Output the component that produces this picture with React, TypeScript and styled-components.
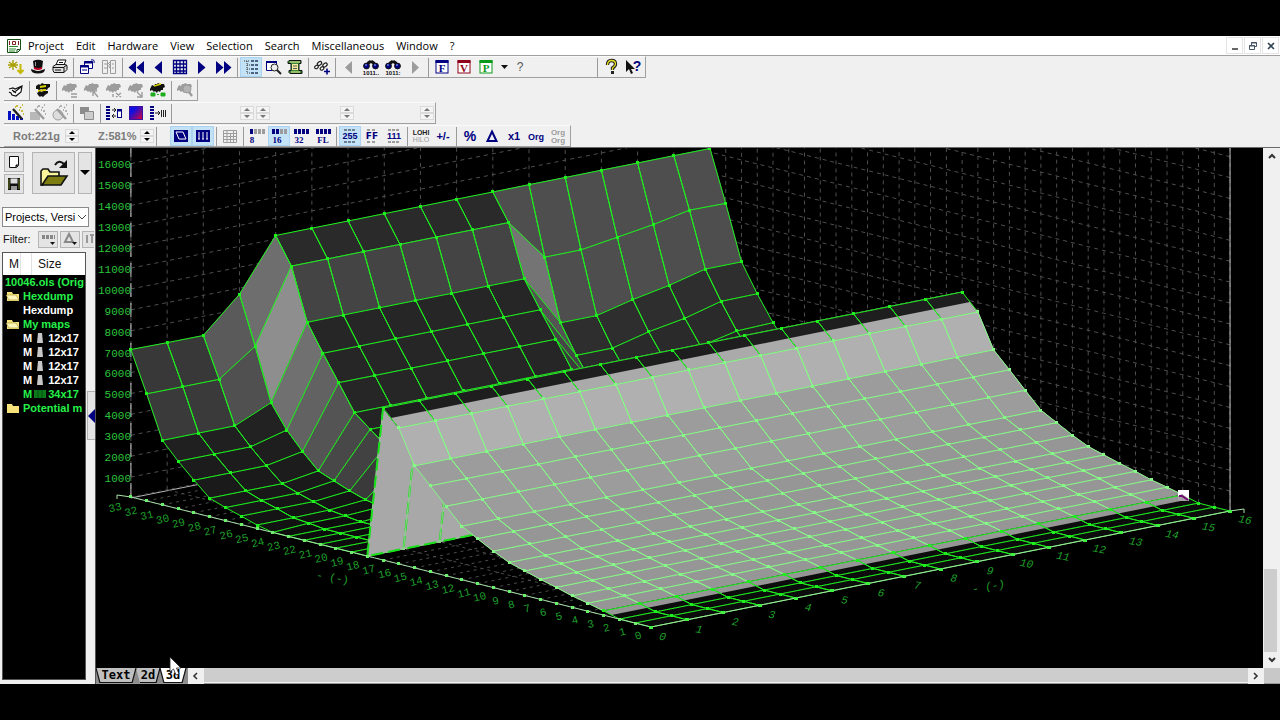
import React from "react";
import styled, { createGlobalStyle } from "styled-components";

const GlobalStyle = createGlobalStyle`
  * { box-sizing: border-box; }
  body { margin: 0; background: #000; font-family: "Open Sans", "Noto Sans", sans-serif; }
  button, select, input { font: inherit; color: inherit; }
  svg { flex: none; }
`;

/* ---------- page frame ---------- */

const Page = styled.div`
  min-height: 100vh;
  padding: 36px 0;
  display: flex;
  flex-direction: column;
  background: #000;
`;
const AppWindow = styled.div`
  flex: 1;
  display: flex;
  flex-direction: column;
  background: #f0f0f0;
  min-width: 0;
`;
const MenuBar = styled.nav`
  display: flex;
  align-items: center;
  height: 20px;
  padding: 0 0 0 6px;
  background: #fff;
  border-bottom: 1px solid #a0a0a0;
`;
const MenuItems = styled.div`
  display: flex;
  flex: 1;
  gap: 12px;
  padding-left: 6px;
`;
const MenuItem = styled.button`
  border: 0;
  padding: 0;
  background: none;
  color: #000;
  font-size: 11px;
  line-height: 18px;
  white-space: nowrap;
`;
const WindowButton = styled.button`
  display: grid;
  place-items: center;
  width: 17px;
  height: 17px;
  margin-right: 1px;
  padding: 0;
  border: 1px solid #e4e4e4;
  background: #fff;
`;

/* ---------- toolbars ---------- */

const ToolArea = styled.div`
  display: flex;
  flex-direction: column;
  align-items: flex-start;
  gap: 1px;
  padding-left: 4px;
  border-bottom: 1px solid #6a6a6a;
`;
const Toolbar = styled.div`
  display: flex;
  align-items: center;
  height: 22px;
  padding: 0 1px;
  border-right: 1px solid #a0a0a0;
  border-bottom: 1px solid #a0a0a0;
  border-top: 1px solid #fafafa;
`;
const ToolButton = styled.button<{ $on?: boolean; $narrow?: boolean }>`
  display: grid;
  place-items: center;
  place-content: center;
  width: ${(p) => (p.$narrow ? 15 : 22)}px;
  height: 20px;
  padding: 0;
  border: 1px solid ${(p) => (p.$on ? "#a9d3f0" : "transparent")};
  background: ${(p) => (p.$on ? "#c4e2f6" : "transparent")};
`;
const Separator = styled.span`
  width: 5px;
  height: 19px;
  display: flex;
  justify-content: center;
  &::before {
    content: "";
    width: 1px;
    background: #9a9a9a;
  }
`;
const Space = styled.span<{ $w: number }>`
  width: ${(p) => p.$w}px;
`;
const Readout = styled.span<{ $w: number }>`
  width: ${(p) => p.$w}px;
  padding-left: 8px;
  color: #7b7b7b;
  font: bold 11px "Liberation Sans", sans-serif;
  white-space: nowrap;
  overflow: hidden;
`;
const SpinnerBox = styled.span`
  display: flex;
  flex-direction: column;
  width: 14px;
`;
const SpinnerButton = styled.button<{ $dim?: boolean }>`
  display: grid;
  place-items: center;
  width: 14px;
  height: 7px;
  padding: 0;
  border: 1px solid #dadada;
  background: #f4f4f4;
  color: ${(p) => (p.$dim ? "#777" : "#000")};
`;

/* ---------- left panel ---------- */

const Body = styled.div`
  flex: 1;
  display: flex;
  min-height: 0;
`;
const SidePanel = styled.aside`
  width: 96px;
  flex: none;
  display: flex;
  background: #f0f0f0;
  border-right: 1px solid #555;
`;
const SideMain = styled.div`
  width: 87px;
  flex: none;
  display: flex;
  flex-direction: column;
  padding: 4px 0 4px 2px;
`;
const FileButtons = styled.div`
  display: flex;
  gap: 3px;
  width: 90px;
  padding-left: 2px;
  height: 42px;
`;
const SmallStack = styled.div`
  display: flex;
  flex-direction: column;
  gap: 2px;
  width: 25px;
`;
const PanelButton = styled.button<{ $w: number; $h: number }>`
  display: grid;
  place-items: center;
  flex: none;
  width: ${(p) => p.$w}px;
  height: ${(p) => p.$h}px;
  padding: 0;
  border: 1px solid #b4b4b4;
  background: #e4e4e4;
`;
const SelectWrap = styled.div`
  display: flex;
  align-items: center;
  width: 87px;
  height: 20px;
  margin-top: 13px;
  border: 1px solid #8a8a8a;
  background: #fff;
`;
const ProjectSelect = styled.select`
  appearance: none;
  flex: 1;
  min-width: 0;
  padding: 0 0 0 2px;
  border: 0;
  background: transparent;
  font: 11px "Liberation Sans", sans-serif;
  overflow: hidden;
`;
const FilterRow = styled.div`
  display: flex;
  align-items: center;
  gap: 2px;
  width: 92px;
  height: 20px;
  margin-top: 2px;
  overflow: hidden;
  color: #111;
`;
const FilterLabel = styled.span`
  width: 34px;
  flex: none;
  padding-left: 1px;
  font: 11px "Liberation Sans", sans-serif;
`;
const Tree = styled.div`
  flex: 1;
  width: 84px;
  margin-top: 3px;
  border: 1px solid #555;
  background: #000;
  overflow: hidden;
`;
const TreeHead = styled.div`
  display: flex;
  height: 22px;
  background: #fff;
  color: #111;
  font: 12px/22px "Liberation Sans", sans-serif;
`;
const HeadCell = styled.span<{ $w: number }>`
  width: ${(p) => p.$w}px;
  flex: none;
  padding-left: 6px;
  border-right: 1px solid #e2e2e2;
`;
const TreeRow = styled.div<{ $c: string; $indent?: boolean }>`
  display: flex;
  align-items: center;
  gap: 2px;
  height: 14px;
  padding-left: ${(p) => (p.$indent ? 20 : 2)}px;
  color: ${(p) => p.$c};
  font: bold 11px/14px "Liberation Sans", sans-serif;
  white-space: nowrap;
`;
const Splitter = styled.div`
  width: 8px;
  display: flex;
  flex-direction: column;
  padding-top: 243px;
`;
const CollapseButton = styled.button`
  display: grid;
  place-items: center;
  width: 8px;
  height: 49px;
  padding: 0;
  border: 1px solid #b0b0b0;
  border-right: 0;
  background: #e4e4e4;
`;

/* ---------- 3d view ---------- */

const MainView = styled.main`
  flex: 1;
  min-width: 0;
  display: flex;
  flex-direction: column;
  background: #000;
`;
const ViewRow = styled.div`
  flex: 1;
  display: flex;
  min-height: 0;
`;
const Canvas = styled.div`
  flex: 1;
  min-width: 0;
  background: #000;
  overflow: hidden;
  svg { display: block; width: 100%; height: auto; }
`;
const VScroll = styled.div`
  width: 17px;
  display: flex;
  flex-direction: column;
  background: #f0f0f0;
  padding: 0 3px 0 1px;
`;
const ScrollButton = styled.button`
  display: grid;
  place-items: center;
  flex: none;
  width: 16px;
  height: 16px;
  padding: 0;
  border: 0;
  background: #f0f0f0;
`;
const VTrack = styled.div`
  flex: 1;
  display: flex;
  flex-direction: column;
  justify-content: flex-end;
`;
const VThumb = styled.div`
  width: 13px;
  height: 17%;
  background: #cdcdcd;
`;
const BottomBar = styled.div`
  display: flex;
  height: 16px;
  background: #f0f0f0;
  border-bottom: 1px solid #999;
`;
const HThumb = styled.div`
  flex: 1;
  margin-bottom: 1px;
  background: #cdcdcd;
`;
const Corner = styled.div`
  width: 16px;
  background: #c8c8c8;
`;
const Tabs = styled.div`
  display: flex;
  position: relative;
  width: 92px;
  background: #8c8c8c;
`;
const Tab = styled.button<{ $w: number; $on?: boolean }>`
  width: ${(p) => p.$w}px;
  height: 15px;
  padding: 0;
  border: 0;
  background: ${(p) => (p.$on ? "#fff" : "#c0c0c0")};
  clip-path: polygon(0 0, 100% 0, calc(100% - 4px) 100%, 4px 100%);
  color: #000;
  font: bold 12px/15px "DejaVu Sans Mono", monospace;
`;
const TabEdges = styled.svg`
  position: absolute;
  left: 0;
  top: 0;
  pointer-events: none;
`;
const Pointer = styled.svg`
  position: absolute;
  left: 73px;
  top: -12px;
  pointer-events: none;
`;

/* ---------- icons ---------- */

const NAVY = "#000080";
const GREY = "#9c9c9c";

const Glyph = ({ children, w = 18, h = 18 }: { children: React.ReactNode; w?: number; h?: number }) => (
  <svg width={w} height={h} viewBox={`0 0 ${w} ${h}`} aria-hidden="true">{children}</svg>
);
const T = ({ x, y, s = 8, c = NAVY, t, f = "Liberation Sans", b = "bold" }: { x: number; y: number; s?: number; c?: string; t: string; f?: string; b?: string }) => (
  <text x={x} y={y} fontSize={s} fill={c} fontFamily={`"${f}", sans-serif`} fontWeight={b} textAnchor="middle">{t}</text>
);
const wand = (c: string, spark: string) => (
  <>
    <path d="M6 5l9 10" stroke={c} strokeWidth="2.4" />
    <path d="M10 1v2M14 3l-1 1M16 7h-2M12 6h1M15 1h1M8 3h1M16 10h1" stroke={spark} strokeWidth="1.5" />
  </>
);
const chip = (c: string) => (
  <path d="M1 8l2-4 2 1 1-2 2 0 1-1 2 1 4 0 1 3-2 1 0 2-2 0-1 2-2-1-1 2-2-2-1 1-2-2-2 1z" fill={c} />
);
const bars = (lit: number) => [0, 1, 2, 3].map((i) => (
  <rect key={i} x={2 + i * 4} y="2" width="3" height="5" fill={i < lit ? NAVY : GREY} />
));
const framed = (c: string, t: string) => (
  <>
    <rect x="3" y="3" width="12" height="12" fill="#fff" stroke={c} />
    <rect x="2.5" y="2" width="13" height="3" fill={c} />
    <T x={9} y={14} s={11} c={c} t={t} f="Liberation Serif" />
  </>
);
const binoc = (
  <>
    <path d="M5 8V4l3-2 1 1 1-1 3 2v4l-4-3z" fill="#111" />
    <circle cx="4.5" cy="8" r="2.9" fill={NAVY} stroke="#111" />
    <circle cx="13.5" cy="8" r="2.9" fill={NAVY} stroke="#111" />
    <path d="M3 7h2M12 7h2" stroke="#9ab8ff" />
  </>
);

const icons: Record<string, React.ReactNode> = {
  app: (
    <>
      <path d="M1.5 2.5h13v10l-3 3h-10z" fill="#fff" stroke="#145014" />
      <path d="M3 9.500h9M3 12h7M3 14h6" stroke="#2a8a2a" />
      <path d="M3.5 4v4M12.5 4v4M6.500 4.500h3v3h-3z" stroke="#802020" fill="none" />
      <path d="M11 15.500v-3h3.500" stroke="#145014" fill="none" />
    </>
  ),
  sparkle: (
    <>
      <path d="M6 2v10M2 4l8 6M10 4l-8 6M1 7h10" stroke="#a8a000" strokeWidth="1.4" />
      <path d="M13.500 6v8M10.500 12l3 3 3-3" stroke="#c4b800" strokeWidth="2" fill="none" />
    </>
  ),
  hat: (
    <>
      <path d="M4 3q5-2.500 10 0l-1 8H5z" fill="#111" />
      <path d="M5 9q4 2 8 0v2q-4 2-8 0z" fill="#c00020" />
      <path d="M2 11q0 4.500 7 4.500t7-4.500l-3 1q-4 2-8 0z" fill="#111" />
      <path d="M6.500 4v4" stroke="#999" />
    </>
  ),
  printer: (
    <>
      <path d="M5 7l2-5h8l-2 5" fill="#fff" stroke="#111" />
      <path d="M2 8.500l3-2h9l2 1v4l-3 3H3l-1-2z" fill="#ddd" stroke="#111" />
      <path d="M2 9.500h11v5M8 4.500h4M4 12h6M13 9l3-2" stroke="#111" fill="none" />
    </>
  ),
  windows: (
    <>
      <path d="M6.500 3.500h8v7h-8z" fill="#fff" stroke={NAVY} />
      <path d="M6 4.500h9" stroke={NAVY} strokeWidth="2" />
      <path d="M2.500 7.500h8v8h-8z" fill="#fff" stroke={NAVY} />
      <path d="M2 8.500h9" stroke={NAVY} strokeWidth="2" />
      <path d="M4 12h5M13 2q4-1 3 3" stroke={NAVY} fill="none" />
    </>
  ),
  compare: (
    <path d="M2.500 2.500h5v13h-5zM10.500 2.500h5v13h-5zM4 6h4l2-2M4 10h3M12 6h2M12 10h2M7 8h4M9 6l2 2-2 2" stroke={GREY} fill="none" />
  ),
  first: <path d="M9 3v13L1.500 9.500zM17 3v13L9.500 9.500z" fill={NAVY} />,
  prev: <path d="M13 3v13L5.500 9.500z" fill={NAVY} />,
  next: <path d="M5 3v13l7.500-6.500z" fill={NAVY} />,
  last: <path d="M1 3v13l7.500-6.500zM9 3v13l7.500-6.500z" fill={NAVY} />,
  grid: <path d="M2.500 2.500h13v13h-13zM5.500 2v14M9 2v14M12.500 2v14M2 6h14M2 9.500h14M2 13h14" stroke={NAVY} fill="none" strokeWidth="1.3" />,
  tree: (
    <>
      <path d="M2 3h5M5 3v12M5 7h3M5 11h3M5 15h3" stroke="#333" strokeDasharray="1 1" fill="none" />
      <path d="M9 3h3M9 7h3M9 11h3M9 15h3M13 3h3M13 7h3M13 11h3M13 15h3" stroke="#233a5c" strokeWidth="1.6" />
    </>
  ),
  zoomwin: (
    <>
      <path d="M2.500 3.500h10v9h-10z" fill="#fff" stroke={NAVY} />
      <path d="M2 4h11" stroke={NAVY} strokeWidth="2" />
      <circle cx="10.500" cy="9.500" r="3.500" fill="#eee" stroke="#222" />
      <path d="M13 12l4 4" stroke="#222" strokeWidth="2" />
    </>
  ),
  scroll: (
    <>
      <path d="M3 2.500h12v3h-2v7h3v3H4l-1-1v-2h2v-7H2v-2z" fill="#3a8a3a" stroke="#111" />
      <path d="M6 6h6v6H6z" fill="#f4eda0" />
      <path d="M4 4h10M5 14h9" stroke="#f4eda0" />
      <path d="M7 8h4M7 10.500h4" stroke="#555" />
    </>
  ),
  feet: (
    <>
      <g fill="#fff" stroke="#222" strokeWidth="1.2">
        <ellipse cx="3.500" cy="9" rx="2" ry="1.500" transform="rotate(-35 3.500 9)" />
        <ellipse cx="6.500" cy="5.500" rx="2.400" ry="1.600" transform="rotate(-35 6.500 5.500)" />
        <ellipse cx="9" cy="10.500" rx="2" ry="1.500" transform="rotate(-35 9 10.500)" />
        <ellipse cx="12" cy="7" rx="2.400" ry="1.600" transform="rotate(-35 12 7)" />
      </g>
      <path d="M11 13.500h6M14 10.500v6" stroke={NAVY} strokeWidth="1.6" />
    </>
  ),
  prevGrey: <path d="M12 3v13L5 9.500z" fill={GREY} />,
  nextGrey: <path d="M6 3v13l7-6.500z" fill={GREY} />,
  find1: <>{binoc}<T x={9} y={17} s={6} c="#111" t="1011.." /></>,
  find2: <>{binoc}<T x={9} y={17} s={6} c="#111" t="1011:" /></>,
  F: framed("#000080", "F"),
  V: framed("#900018", "V"),
  P: framed("#0a9a1a", "P"),
  down: <path d="M5 7h7l-3.500 4z" fill="#111" />,
  ask: <T x={9} y={13} s={12} c="#555" t="?" b="normal" />,
  help: (
    <>
      <path d="M5.500 7q0-4.500 4-4.500t4 3.500q0 2-3 4v2" stroke="#222" strokeWidth="3.4" fill="none" />
      <path d="M5.500 7q0-4.500 4-4.500t4 3.500q0 2-3 4v2" stroke="#e6e020" strokeWidth="1.3" fill="none" />
      <rect x="9" y="13" width="3" height="3" fill="#222" />
    </>
  ),
  helpArrow: (
    <>
      <path d="M2 2v12l3-3 2 5 2-1-2-4h4z" fill="#111" />
      <T x={13} y={13} s={14} t="?" />
    </>
  ),
  book: <path d="M2 8l4-1 2 1 7-3-1 6-5 4-4-1-1-2-2-1M6 11l3-1 5-4M5 9l4 3" stroke="#111" fill="#fff" strokeWidth="1.2" />,
  chipRW: (
    <>
      <path d="M2 5l3-2 1 1 2-2 2 1h6l0 3-2 1-1 2-3-1-1 1-2-1-2 2-1-2-2 0z" fill="#111" />
      <path d="M6 6l6-1M4 10l8-1" stroke="#d8d000" strokeWidth="1.8" />
      <path d="M3 12l3-2 1 1 3-1h4l0 2-3 2-2 2-2-1-1 1-2-2z" fill="#111" />
    </>
  ),
  chipEq: <>{chip(GREY)}<path d="M10 13h6M10 16h6" stroke={GREY} strokeWidth="1.4" /></>,
  chipK: <>{chip(GREY)}<path d="M10 10l5 6M10 10v5M10 10h4" stroke={GREY} strokeWidth="1.4" /></>,
  chipX: <>{chip(GREY)}<path d="M11 12l5 4M16 12l-5 4M8 13v3" stroke={GREY} strokeWidth="1.4" /></>,
  chipD: <>{chip(GREY)}<path d="M10 11l5 5M15 11v5h-5" stroke={GREY} strokeWidth="1.4" fill="none" /></>,
  chipGreen: (
    <>
      {chip("#111")}
      <path d="M5 5l7-2" stroke="#d8d000" strokeWidth="1.4" />
      <path d="M2 12h4v3H2zM12 12h4v3h-4zM8 13.500h2" fill="#1fae1f" stroke="#1fae1f" />
    </>
  ),
  chipFind: <>{chip(GREY)}<circle cx="11" cy="8" r="4" fill="#b4b4b4" stroke={GREY} /><path d="M13 11l3 4" stroke={GREY} strokeWidth="2.4" /></>,
  wandBlue: <><path d="M1 7h3v9H1zM5 10h3v6H5zM9 12h3v4H9zM13 14h3v2h-3z" fill="#0010c0" />{wand("#222", "#b8ac00")}</>,
  wandGrey1: <><path d="M1 8h10v8H1z" fill="#b8b8b8" />{wand(GREY, GREY)}</>,
  wandGrey2: <><circle cx="7" cy="11" r="5" fill="#ddd" stroke={GREY} />{wand(GREY, GREY)}</>,
  copies: <><path d="M2 3h9v7H2z" fill="#8c8c8c" /><path d="M6.500 7.500h9v8h-9z" fill="#ccc" stroke="#8c8c8c" /></>,
  colLeft: (
    <>
      <path d="M3 2v14" stroke={NAVY} strokeWidth="4" strokeDasharray="2 1" />
      <path d="M7 6h4M7 12h4M9 4l2 2-2 2M9 10l-2 2 2 2" stroke="#222" fill="none" />
      <rect x="12.500" y="5.500" width="4" height="8" fill="#fff" stroke={NAVY} /><path d="M12 6.500h5" stroke={NAVY} strokeWidth="2" />
    </>
  ),
  heat: (
    <>
      <defs><linearGradient id="heat" x2="1" y2="1"><stop offset="0.3" stopColor="#1010e0" /><stop offset="1" stopColor="#e00030" /></linearGradient></defs>
      <rect x="2.500" y="2.500" width="13" height="13" fill="url(#heat)" stroke="#3a10a0" />
    </>
  ),
  colRight: (
    <>
      <path d="M3 2v14" stroke={NAVY} strokeWidth="4" strokeDasharray="2 1" />
      <path d="M6 9h5M9 7l2 2-2 2" stroke="#222" fill="none" />
      <path d="M12.500 6v7M14.500 6v7M16.500 6v7" stroke="#222" />
    </>
  ),
  view3d: <><rect x="2" y="3" width="14" height="12" fill={NAVY} /><path d="M4 5h7l3 7H7z" fill="none" stroke="#fff" /></>,
  view2d: <><rect x="2" y="3" width="14" height="12" fill={NAVY} /><path d="M5 5v7M9 5v7M13 5v7M4 12h2M8 12h2M12 12h2" stroke="#fff" /></>,
  table: <path d="M2.500 3.500h13v12h-13zM2 6.500h14M2 9.500h14M2 12.500h14M6 3v12M9.500 6v9M12.500 3v12" stroke={GREY} fill="none" />,
  b8: <>{bars(1)}<T x={4} y={16} s={9} t="8" f="Liberation Serif" /></>,
  b16: <>{bars(2)}<T x={7} y={16} s={9} t="16" f="Liberation Serif" /></>,
  b32: <>{bars(4)}<T x={7} y={16} s={9} t="32" f="Liberation Serif" /></>,
  bfl: <>{bars(4)}<T x={9} y={16} s={9} t="FL" f="Liberation Serif" /></>,
  dec: <><path d="M3 3h12M3 15h12" stroke="#6d7f95" strokeDasharray="3 1" strokeWidth="2" /><T x={9} y={12} s={9} t="255" /></>,
  hex: <><path d="M4 3h10M4 15h10" stroke={GREY} strokeDasharray="3 2" strokeWidth="2" /><T x={9} y={12} s={9} t="FF" f="DejaVu Sans" /></>,
  bin: <><path d="M3 3h12M3 15h12" stroke={GREY} strokeDasharray="3 1" strokeWidth="2" /><T x={9} y={12} s={9} t="111" /></>,
  lohi: <><T x={9} y={8} s={7} c="#222" t="LOHI" /><T x={9} y={15} s={7} c={GREY} t="HILO" b="normal" /></>,
  sign: <T x={9} y={13} s={11} t="+/-" />,
  pct: <T x={9} y={14} s={14} t="%" />,
  delta: <path d="M9 4.500l4.500 9.500h-9z" fill="none" stroke={NAVY} strokeWidth="2" />,
  x1: <T x={9} y={13} s={11} t="x1" />,
  org: <T x={9} y={13} s={9} t="Org" />,
  org2: <><T x={9} y={8} s={8} c={GREY} t="Org" /><T x={9} y={16} s={8} c={GREY} t="Org" /></>,
};

/* "|" draws a separator, a number leaves a gap, a trailing "*" marks a pressed button */
const Tools = ({ items }: { items: (string | number)[] }) => (
  <>
    {items.map((it, i) => {
      if (it === "|") return <Separator key={i} />;
      if (typeof it === "number") return <Space key={i} $w={it} />;
      const on = it.endsWith("*");
      const name = on ? it.slice(0, -1) : it;
      return (
        <ToolButton key={i} $on={on} $narrow={name === "down" || name === "ask"} aria-label={name} aria-pressed={on}>
          <Glyph>{icons[name]}</Glyph>
        </ToolButton>
      );
    })}
  </>
);
const Spinner = ({ dim }: { dim?: boolean }) => (
  <SpinnerBox>
    <SpinnerButton $dim={dim} aria-label="Increase"><Glyph w={6} h={3}><path d="M0 3h6L3 0z" fill="currentColor" /></Glyph></SpinnerButton>
    <SpinnerButton $dim={dim} aria-label="Decrease"><Glyph w={6} h={3}><path d="M0 0h6L3 3z" fill="currentColor" /></Glyph></SpinnerButton>
  </SpinnerBox>
);

/* ---------- surface data ---------- */

const COLS = 17;
const ROWS = 34;
const flat = (v: number) => Array<number>(COLS).fill(v);
const plateau = (head: number[], mid: number, tail: number[]) => [...head, ...Array<number>(COLS - head.length - tail.length).fill(mid), ...tail];

const heights: number[][] = [
  0, 0, 0, 4.3, 8, 11.4, 16, 20, 24.5, 29, 36.4, 45, 53.5, 69.5, 86, 102, 136, 152,
].map(flat);
heights[18] = flat(0);
heights[19] = flat(0);
heights[20] = flat(0);
heights[21] = flat(0);
heights[22] = plateau([0, 0, 0, 0], 4, []);
heights[23] = plateau([0, 0, 0, 2], 12, []);
heights[24] = plateau([0, 2, 2, 4], 25, []);
heights[25] = plateau([3.5, 3.5, 4, 7], 38, []);
heights[26] = plateau([8.5, 8.5, 8.5, 12], 50, []);
heights[27] = plateau([13, 13, 13, 18], 62.3, [22, 22, 28, 33, 38, 40]);
heights[28] = plateau([18.5, 18.5, 18.5, 24], 75, [35, 35, 42, 47, 52, 53]);
heights[29] = plateau([32.5, 32.5, 32.5, 39.5], 101, [50, 50, 59, 65, 73, 74]);
heights[30] = plateau([47.5, 47.5, 47.5, 57], 126.5, [73.7, 73.7, 82.8, 89, 98.7, 99]);
heights[31] = plateau([64.5, 64.5, 64.5, 80.4], 153.6, [102.3, 102.3, 111, 118, 127, 127]);
heights[32] = plateau([107, 107, 107, 133], 205.8, [164, 164, 169.4, 174.8, 182, 181.5]);
heights[33] = plateau([147.5, 147, 147, 181], 232.5, []);

const SX = 36.19, SY = 7.25, RX = 15.76, RY = 3.94;
const base = (i: number, j: number): [number, number] => [651 + SX * i - RX * j, 627 - SY * i - RY * j];
const pt = (i: number, j: number): [number, number] => {
  const [x, y] = base(i, j);
  return [x, y - heights[j][i]];
};
const mid = (a: [number, number], b: [number, number]): [number, number] => [(a[0] + b[0]) / 2, (a[1] + b[1]) / 2];
const str = (ps: [number, number][]) => ps.map((p) => p.map((v) => v.toFixed(1)).join(",")).join(" ");

/* grey level of each strip of the rear slope: left flat, step 2, step 3, plateau, drop, right side */
const rearShade: Record<number, number[]> = {
  32: [56, 90, 110, 42, 78, 78],
  31: [58, 80, 142, 68, 116, 78],
  30: [32, 34, 112, 38, 84, 46],
  29: [28, 30, 98, 38, 70, 42],
  28: [26, 28, 84, 38, 60, 36],
  27: [24, 26, 72, 36, 50, 32],
  26: [22, 24, 66, 34, 44, 30],
  25: [20, 20, 58, 32, 40, 28],
  24: [18, 18, 50, 30, 36, 26],
  23: [14, 14, 36, 28, 30, 24],
};
const shade = (i: number, j: number): number => {
  if (j >= 18) {
    const s = rearShade[j];
    if (!s) return 12;
    if (i < 2) return s[0];
    if (i === 2) return s[1];
    if (i === 3) return s[2];
    if (i < 10) return s[3];
    return i === 10 ? s[4] : s[5];
  }
  if (j === 17) return 168;
  if (j === 16) return 30;
  if (j === 15) return 176;
  if (j < 3) return 12;
  return j > 11 ? 156 : 150;
};
const grey = (v: number) => `rgb(${v},${v},${v})`;

const Surface = () => {
  const out: React.ReactNode[] = [];
  for (let j = ROWS - 2; j >= 0; j--) {
    const lines: React.ReactNode[] = [];
    for (let i = COLS - 2; i >= 0; i--) {
      const a = pt(i, j), b = pt(i + 1, j), c = pt(i + 1, j + 1), d = pt(i, j + 1);
      const v = shade(i, j);
      const line = j >= 3 && j < 16 ? "#86fa86" : j === 17 ? "#8ccf8c" : "#1ef01e";
      out.push(<polygon key={`q${i}-${j}`} points={str([a, b, c, d])} fill={grey(v)} stroke={grey(v)} />);
      if (j === 16 || j === 2) {
        const m0 = mid(a, d), m1 = mid(b, c);
        out.push(
          <polygon key={`h${i}-${j}`} points={str(j === 16 ? [a, b, m1, m0] : [m0, m1, c, d])} fill={grey(j === 16 ? 170 : 150)} />,
        );
      }
      lines.push(<polygon key={`l${i}-${j}`} points={str([a, b, c, d])} fill="none" stroke={line} strokeWidth="1" />);
      if (j === 17) {
        lines.push(<path key={`w${i}`} d={`M${a[0]} ${a[1]}L${d[0]} ${d[1]}L${c[0]} ${c[1]}`} stroke="#18e018" strokeWidth="2" strokeDasharray="12 5" fill="none" />);
      }
      [a, b, c, d].forEach((p, k) => {
        lines.push(<rect key={`d${i}-${j}-${k}`} x={Math.round(p[0] - 1.5)} y={Math.round(p[1] - 1.5)} width="3" height="3" fill={line} />);
      });
    }
    out.push(...lines);
  }
  return <g>{out}</g>;
};

const Seg = ({ a, b, c = "#4e4e4e", dash = "4 4" }: { a: [number, number]; b: [number, number]; c?: string; dash?: string }) => (
  <line x1={a[0]} y1={a[1]} x2={b[0]} y2={b[1]} stroke={c} strokeDasharray={dash} />
);
const range = (n: number) => Array.from({ length: n }, (_, i) => i);
const up = (p: [number, number], h: number): [number, number] => [p[0], p[1] - h];

const AXIS = "#1f9f2a";
const Scene = () => (
  <svg viewBox="96 148 1167 520" role="img" aria-label="3D map">
    {range(COLS).map((i) => <Seg key={`bv${i}`} a={base(i, 33)} b={up(base(i, 33), 400)} />)}
    {range(33).map((j) => <Seg key={`rv${j}`} a={base(16, j)} b={up(base(16, j), 400)} />)}
    {range(22).map((k) => (
      <React.Fragment key={`h${k}`}>
        <Seg a={up(base(0, 33), 20.9 * k - 1)} b={up(base(16, 33), 20.9 * k - 1)} c={k ? "#4e4e4e" : "#b8b8b8"} dash={k ? "4 4" : "none"} />
        <Seg a={up(base(16, 0), 20.9 * k - 1)} b={up(base(16, 33), 20.9 * k - 1)} />
      </React.Fragment>
    ))}
    {range(ROWS).map((j) => <Seg key={`fj${j}`} a={base(0, j)} b={base(16, j)} c="#4c4c4c" dash="3 4" />)}
    {range(COLS).map((i) => <Seg key={`fi${i}`} a={base(i, 0)} b={base(i, 33)} c="#4c4c4c" dash="3 4" />)}
    <Seg a={base(0, 33)} b={up(base(0, 33), 400)} c="#c8c8c8" dash="14 6" />
    <Seg a={base(16, 0)} b={up(base(16, 0), 400)} c="#c0c0c0" dash="none" />
    <Surface />
    <polyline points={`117,499 117,495 131,497 ${str([base(0, 0), base(16, 0)])} 1244,509 1244,513`} fill="none" stroke="#a8e0a8" />
    {range(ROWS).map((j) => <rect key={j} x={Math.round(base(0, j)[0] - 1.5)} y={Math.round(base(0, j)[1] - 1.5)} width="3" height="3" fill="#6cf06c" />)}
    {range(COLS).map((i) => <rect key={i} x={Math.round(base(i, 0)[0] - 2)} y={Math.round(base(i, 0)[1] - 1.5)} width="4" height="3" fill="#40f040" />)}
    <rect x="1178" y="490" width="11" height="10" fill="#fff" />
    <path d="M1178 496l4-2 7 5v2h-11z" fill="#a8a0a8" />
    <path d="M1179 496h3l6 4" stroke="#70106c" strokeWidth="2" fill="none" />
    <g fill="#2cc43c" fontFamily='"Liberation Mono", monospace' fontSize="11" textAnchor="end">
      {range(16).map((k) => <text key={k} x="131" y={482 - Math.round(20.9 * k)}>{(k + 1) * 1000}</text>)}
    </g>
    <g fill={AXIS} fontFamily='"Liberation Mono", monospace' fontSize="11" textAnchor="middle">
      {range(ROWS).map((j) => (
        <text key={j} transform={`translate(${639 - 15.85 * j} ${639 - 3.88 * j}) rotate(-14)`}>{j}</text>
      ))}
      <text transform="translate(332 581) rotate(10)">- (-)</text>
      <g fontStyle="italic">
        {range(COLS).map((i) => (
          <text key={i} transform={`translate(${662 + 36.4 * i} ${640 - 7.3 * i}) rotate(10)`}>{i}</text>
        ))}
        <text transform="translate(989 590) rotate(-10)">- (-)</text>
      </g>
    </g>
  </svg>
);

/* ---------- tree ---------- */

const Folder = ({ open }: { open?: boolean }) => (
  <Glyph w={16} h={12}>
    <path d="M2 2h5l1 2h6v7H2z" fill="#f5e27a" />
    {open && <path d="M4 10L1 5h10l3 5z" fill="#fdf6b8" stroke="#8a7a20" strokeWidth="0.5" />}
  </Glyph>
);
const MapMark = ({ green }: { green?: boolean }) => (
  <Glyph w={12} h={12}>
    {green ? <path d="M0 2h12v8H0z" fill="#0a7a1a" /> : <path d="M4 1h4l1 10H3z" fill="#c8c8c8" />}
    {green && <path d="M4 2v8M8 2v8" stroke="#045010" />}
  </Glyph>
);
const GREEN = "#25f04a";

export default function App() {
  return (
    <Page>
      <GlobalStyle />
      <AppWindow>
        <MenuBar aria-label="Main menu">
          <Glyph w={16} h={18}>{icons.app}</Glyph>
          <MenuItems>
            {["Project", "Edit", "Hardware", "View", "Selection", "Search", "Miscellaneous", "Window", "?"].map((m) => (
              <MenuItem key={m}>{m}</MenuItem>
            ))}
          </MenuItems>
          <WindowButton aria-label="Minimize"><Glyph w={10} h={10}><path d="M2 8h6" stroke="#333" strokeWidth="1.5" /></Glyph></WindowButton>
          <WindowButton aria-label="Restore"><Glyph w={10} h={10}><path d="M1.500 4.500h5v4h-5zM3.500 4V1.500h5v4H7M1 5h6M3 2h6" stroke="#456" fill="none" /></Glyph></WindowButton>
          <WindowButton aria-label="Close"><Glyph w={10} h={10}><path d="M2 2l6 6M8 2L2 8" stroke="#345" strokeWidth="1.6" /></Glyph></WindowButton>
        </MenuBar>

        <ToolArea>
          <Toolbar>
            <Tools items={["sparkle", "hat", "printer", "|", "windows", "compare", "|", "first", "prev", "grid", "next", "last", "|", "tree*", "zoomwin", "scroll", "|", "feet", "|", "prevGrey", "find1", "find2", "nextGrey", "|", "F", "V", "P"]} />
            <Tools items={["down", "ask", 68, "|", "help", "helpArrow"]} />
          </Toolbar>
          <Toolbar>
            <Tools items={["book", "|", "chipRW", "|", "chipEq", "chipK", "chipX", "chipD", "chipGreen", "|", "chipFind"]} />
          </Toolbar>
          <Toolbar>
            <Tools items={["wandBlue", "wandGrey1", "wandGrey2", "|", "copies", "|", "colLeft", "heat", "colRight", "|", 66]} />
            <Spinner dim /><Space $w={2} /><Spinner dim /><Space $w={70} /><Spinner dim /><Space $w={66} /><Spinner dim />
          </Toolbar>
          <Toolbar>
            <Readout $w={60}>Rot:221g</Readout><Spinner /><Space $w={11} /><Readout $w={50}>Z:581%</Readout><Spinner />
            <Separator /><Space $w={11} />
            <Tools items={["view3d*", "view2d*", "|", "table", "|", "b8", "b16*", "b32", "bfl", "|", "dec*", "hex", "bin", "|", "lohi", "sign", "|", "pct", "delta", "x1", "org", "org2"]} />
          </Toolbar>
        </ToolArea>

        <Body>
          <SidePanel>
            <SideMain>
              <FileButtons>
                <SmallStack>
                  <PanelButton $w={20} $h={20} aria-label="New"><Glyph w={14} h={14}><path d="M2.500 1.500h9v9l-2 2h-7z" fill="#fff" stroke="#111" /><path d="M9 12V10h2" stroke="#111" /></Glyph></PanelButton>
                  <PanelButton $w={20} $h={20} aria-label="Save"><Glyph w={14} h={14}><path d="M1 1h12v12H1z" fill="#111" /><path d="M3.500 1.500h7v5h-7z" fill="#ddd" /><path d="M2 2v10M12 2v10" stroke="#6a7a20" /><path d="M4 9h6v4H4z" fill="#999" /></Glyph></PanelButton>
                </SmallStack>
                <PanelButton $w={43} $h={42} aria-label="Open">
                  <Glyph w={34} h={34}>
                    <path d="M4 29V15l2-2h5l2 3h9v5H12l-6 8z" fill="#fbf59a" stroke="#111" strokeWidth="1.6" />
                    <path d="M5 29l6-9h19l-6 9z" fill="#7c7c10" stroke="#111" strokeWidth="1.6" />
                    <path d="M18 9q4-6 9-1" fill="none" stroke="#111" strokeWidth="2" /><path d="M30 4v8h-8z" fill="#111" />
                  </Glyph>
                </PanelButton>
                <PanelButton $w={14} $h={42} aria-label="Recent files"><Glyph w={10} h={6}><path d="M0 0h10L5 5z" fill="#000" /></Glyph></PanelButton>
              </FileButtons>
              <SelectWrap>
                <ProjectSelect aria-label="Panel"><option>Projects, Versi</option></ProjectSelect>
                <Glyph w={12} h={8}><path d="M2 2l4 4 4-4" fill="none" stroke="#444" /></Glyph>
              </SelectWrap>
              <FilterRow>
                <FilterLabel>Filter:</FilterLabel>
                <PanelButton $w={20} $h={17} aria-label="Filter by bars"><Glyph w={16} h={14}><path d="M2 5h13" stroke="#888" strokeWidth="4" strokeDasharray="3 1" /><path d="M10 10h5l-2.500 3z" fill="#111" /></Glyph></PanelButton>
                <PanelButton $w={20} $h={17} aria-label="Filter by change"><Glyph w={16} h={14}><path d="M7 2l4 8H3z" fill="none" stroke="#888" strokeWidth="2" /><path d="M10 10h5l-2.500 3z" fill="#111" /></Glyph></PanelButton>
                <PanelButton $w={20} $h={17} aria-label="Filter by type"><Glyph w={16} h={14}><path d="M3 3v8M6 3h6M8 3v8" stroke="#999" strokeWidth="2" /></Glyph></PanelButton>
              </FilterRow>
              <Tree>
                <TreeHead><HeadCell $w={18}>M</HeadCell><HeadCell $w={11} /><HeadCell $w={60}>Size</HeadCell></TreeHead>
                <TreeRow $c={GREEN}>10046.ols (Orig</TreeRow>
                <TreeRow $c={GREEN}><Folder open />Hexdump</TreeRow>
                <TreeRow $c="#fff" $indent>Hexdump</TreeRow>
                <TreeRow $c={GREEN}><Folder open />My maps</TreeRow>
                {[0, 1, 2, 3].map((k) => <TreeRow key={k} $c="#fff" $indent>M<MapMark />12x17</TreeRow>)}
                <TreeRow $c={GREEN} $indent>M<MapMark green />34x17</TreeRow>
                <TreeRow $c={GREEN}><Folder />Potential m</TreeRow>
              </Tree>
            </SideMain>
            <Splitter>
              <CollapseButton aria-label="Collapse panel"><Glyph w={7} h={14}><path d="M7 0v14L0 7z" fill={NAVY} /></Glyph></CollapseButton>
            </Splitter>
          </SidePanel>

          <MainView>
            <ViewRow>
              <Canvas><Scene /></Canvas>
              <VScroll>
                <ScrollButton aria-label="Scroll up"><Glyph w={10} h={8}><path d="M2 6l3-3 3 3" fill="none" stroke="#333" strokeWidth="2" /></Glyph></ScrollButton>
                <VTrack><VThumb /></VTrack>
                <ScrollButton aria-label="Scroll down"><Glyph w={10} h={8}><path d="M2 2l3 3 3-3" fill="none" stroke="#333" strokeWidth="2" /></Glyph></ScrollButton>
              </VScroll>
            </ViewRow>
            <BottomBar>
              <Tabs>
                <Tab $w={40}>Text</Tab>
                <Tab $w={24}>2d</Tab>
                <Tab $w={26} $on>3d</Tab>
                <TabEdges width="92" height="15">
                  <path d="M0 0l4 15M40 0l-4 15M64 0l-4 15M64 0l4 15M90 0l-4 15M4 14.500h32M44 14.500h16M68 14.500h18" stroke="#111" strokeWidth="1.2" fill="none" />
                </TabEdges>
                <Pointer width="13" height="20" viewBox="0 0 13 20"><path d="M1 1v15l3.500-3 2.500 6 3-1-2.500-6H12z" fill="#fff" stroke="#222" strokeWidth="0.8" /></Pointer>
              </Tabs>
              <ScrollButton aria-label="Scroll left"><Glyph w={8} h={10}><path d="M5 2L2 5l3 3" fill="none" stroke="#333" strokeWidth="1.6" /></Glyph></ScrollButton>
              <HThumb />
              <ScrollButton aria-label="Scroll right"><Glyph w={8} h={10}><path d="M2 2l3 3-3 3" fill="none" stroke="#333" strokeWidth="1.6" /></Glyph></ScrollButton>
              <Corner />
            </BottomBar>
          </MainView>
        </Body>
      </AppWindow>
    </Page>
  );
}
